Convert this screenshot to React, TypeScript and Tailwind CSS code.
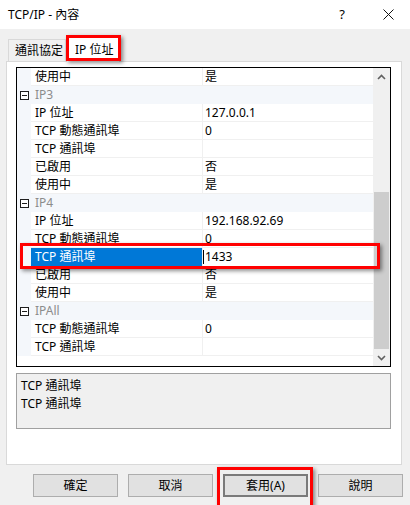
import React from 'react';

type Row = { t: 'p' | 'c'; n: string; v?: string; sel?: boolean };

const rows: Row[] = [
  { t: 'p', n: '使用中', v: '是' },
  { t: 'c', n: 'IP3' },
  { t: 'p', n: 'IP 位址', v: '127.0.0.1' },
  { t: 'p', n: 'TCP 動態通訊埠', v: '0' },
  { t: 'p', n: 'TCP 通訊埠', v: '' },
  { t: 'p', n: '已啟用', v: '否' },
  { t: 'p', n: '使用中', v: '是' },
  { t: 'c', n: 'IP4' },
  { t: 'p', n: 'IP 位址', v: '192.168.92.69' },
  { t: 'p', n: 'TCP 動態通訊埠', v: '0' },
  { t: 'p', n: 'TCP 通訊埠', v: '1433', sel: true },
  { t: 'p', n: '已啟用', v: '否' },
  { t: 'p', n: '使用中', v: '是' },
  { t: 'c', n: 'IPAll' },
  { t: 'p', n: 'TCP 動態通訊埠', v: '0' },
  { t: 'p', n: 'TCP 通訊埠', v: '' },
];

function Minus() {
  return (
    <div className="w-[9px] h-[9px] border border-[#1e1e1e] bg-white flex items-center justify-center">
      <div className="w-[5px] h-[1px] bg-[#1e1e1e]" />
    </div>
  );
}

function GridRow({ r }: { r: Row }) {
  if (r.t === 'c') {
    return (
      <div className="flex h-[18px] bg-[#f4f7fb]">
        <div className="w-[14px] flex items-center justify-center pl-[1px]">
          <Minus />
        </div>
        <div className="flex-1 flex items-center pl-[4px] text-[#8c8c8c]">{r.n}</div>
      </div>
    );
  }
  return (
    <div className="flex h-[18px]">
      <div className="w-[14px] bg-[#f4f7fb]" />
      <div
        className={
          r.sel
            ? 'w-[171px] flex items-center pl-[4px] bg-[#0078d7] text-white'
            : 'w-[171px] flex items-center pl-[4px] bg-white text-black border-b border-[#f0f0f0]'
        }
      >
        {r.n}
      </div>
      <div className="w-[1px] bg-[#f0f0f0]" />
      <div
        className={
          r.sel
            ? 'flex-1 flex items-center bg-white text-black'
            : 'flex-1 flex items-center pl-[2px] bg-white text-black border-b border-[#f0f0f0]'
        }
      >
        {r.sel ? <div className="w-[1px] h-[14px] bg-black mr-[1px]" /> : null}
        {r.v}
      </div>
    </div>
  );
}

function Chevron({ up }: { up: boolean }) {
  return (
    <svg width="9" height="6" viewBox="0 0 9 6">
      {up ? (
        <path d="M1 5 L4.5 1.5 L8 5" fill="none" stroke="#606060" strokeWidth="1.6" />
      ) : (
        <path d="M1 1 L4.5 4.5 L8 1" fill="none" stroke="#606060" strokeWidth="1.6" />
      )}
    </svg>
  );
}

export default function App() {
  return (
    <div
      className="relative w-[410px] h-[505px] overflow-hidden bg-[#f0f0f0] text-[12px] leading-none text-black"
      style={{ fontFamily: '"Noto Sans", "Noto Sans CJK TC", sans-serif' }}
    >
      {/* title bar */}
      <div className="h-[29px] bg-white flex items-center">
        <div className="pl-[8px] text-[12px] flex-1">TCP/IP - 內容</div>
        <div className="w-[20px] text-[13px] text-center mr-[30px]">?</div>
        <div className="w-[12px] h-[12px] mr-[16px] flex items-center justify-center">
          <svg width="11" height="11" viewBox="0 0 11 11">
            <path d="M0.5 0.5 L10.5 10.5 M10.5 0.5 L0.5 10.5" stroke="#111" strokeWidth="1" />
          </svg>
        </div>
      </div>

      {/* tabs */}
      <div className="pl-[8px] pt-[6px] flex items-end h-[32px]">
        <div className="h-[22px] w-[58px] border border-b-0 border-[#d9d9d9] bg-[#f0f0f0] flex items-center pl-[6px]">
          通訊協定
        </div>
        <div className="h-[25px] w-[54px] bg-white border border-b-0 border-[#d9d9d9] flex items-center pl-[8px] -mb-[1px] relative z-10">
          IP 位址
        </div>
      </div>

      {/* panel */}
      <div className="ml-[6px] w-[396px] h-[404px] bg-white border border-[#d9d9d9] pl-[9px] pr-[10px] pt-[5px]">
        <div className="h-[300px] border border-black flex">
          <div className="flex-1 flex flex-col bg-white">
            {rows.map((r, i) => (
              <GridRow key={i} r={r} />
            ))}
          </div>
          <div className="w-[17px] bg-[#f0f0f0] flex flex-col">
            <div className="h-[17px] flex items-center justify-center">
              <Chevron up />
            </div>
            <div className="flex-1 flex flex-col justify-end">
              <div className="h-[157px] mx-[1px] bg-[#cdcdcd]" />
            </div>
            <div className="h-[17px] flex items-center justify-center">
              <Chevron up={false} />
            </div>
          </div>
        </div>
        <div className="mt-[6px] h-[56px] border border-[#a0a0a0] bg-[#f0f0f0] pl-[4px] pt-[3px] flex flex-col">
          <div className="h-[18px] flex items-center">TCP 通訊埠</div>
          <div className="h-[18px] flex items-center">TCP 通訊埠</div>
        </div>
      </div>

      {/* buttons */}
      <div className="flex justify-end gap-[10px] pr-[7px] mt-[9px]">
        {['確定', '取消', '套用(A)', '說明'].map((b) => (
          <div
            key={b}
            className={
              b === '套用(A)'
                ? 'w-[85px] h-[23px] bg-[#e1e1e1] border-2 border-[#7a7a7a] flex items-center justify-center'
                : 'w-[85px] h-[23px] bg-[#e1e1e1] border border-[#adadad] flex items-center justify-center'
            }
          >
            {b}
          </div>
        ))}
      </div>

      {/* red highlight boxes */}
      <div className="absolute left-[66px] top-[35px] w-[55px] h-[26px] border-[3px] border-[#ff0000] shadow-[2px_2px_4px_rgba(0,0,0,0.45)] z-20" />
      <div className="absolute left-[20px] top-[243px] w-[360px] h-[26px] border-[3px] border-[#ff0000] shadow-[2px_2px_4px_rgba(0,0,0,0.45)]" />
      <div className="absolute left-[217px] top-[467px] w-[96px] h-[44px] border-[3px] border-[#ff0000] shadow-[2px_2px_4px_rgba(0,0,0,0.45)]" />
    </div>
  );
}
